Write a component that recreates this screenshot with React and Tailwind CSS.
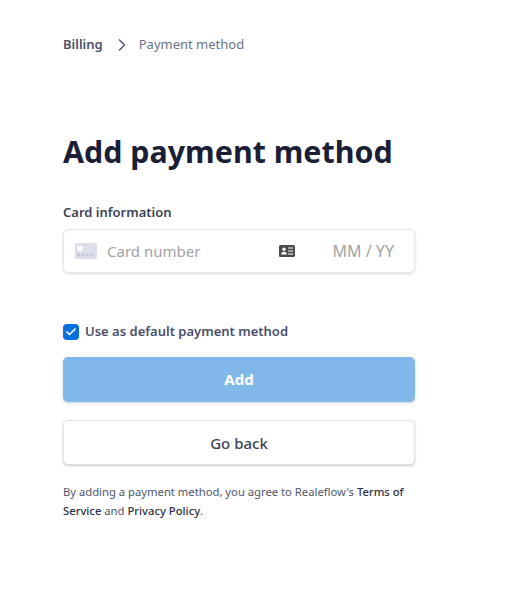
import React from 'react';
import { ChevronRight, Check } from 'lucide-react';

const CardIcon = () => (
  <svg width="22" height="16" viewBox="0 0 22 16" className="shrink-0">
    <rect width="22" height="16" rx="2" fill="#dcdfe9" />
    <rect x="2" y="3" width="6" height="5" rx="1" fill="#fff" />
    <path d="M2 12h3M6.5 12h3M11 12h3M15.5 12h3" stroke="#a9afc4" strokeWidth="1" />
  </svg>
);

const IdIcon = () => (
  <svg width="16" height="12" viewBox="0 0 16 12" className="shrink-0">
    <rect width="16" height="12" rx="1.5" fill="#4b4b4b" />
    <circle cx="5" cy="4.2" r="1.7" fill="#fff" />
    <path d="M2.2 9.6c0-1.8 1.2-2.8 2.8-2.8s2.8 1 2.8 2.8z" fill="#fff" />
    <path d="M9 3h5.2M9 6h5.2M9 9h5.2" stroke="#fff" strokeWidth="1.2" />
  </svg>
);

export default function App() {
  return (
    <div className="min-h-[591px] bg-white pl-[63px] pt-[35px] font-['Noto_Sans',sans-serif]">
      <div className="w-[352px]">
        {/* Breadcrumb */}
        <nav className="flex h-[19px] items-center text-[13px]">
          <span className="font-semibold text-[#4a5069]">Billing</span>
          <ChevronRight className="ml-[9px] mr-[7px] h-[20px] w-[20px] text-[#4a5069]" strokeWidth={1.6} />
          <span className="text-[#6b7288]">Payment method</span>
        </nav>

        <h1 className="mt-[76px] text-[30.4px] font-bold leading-[44px] text-[#1a1f36]">
          Add payment method
        </h1>

        <label className="mt-[29px] block text-[13px] font-semibold leading-[18px] text-[#3c4257]">
          Card information
        </label>

        {/* Card input */}
        <div className="mt-[8px] flex h-[44px] items-center rounded-[6px] border border-[#e8e9ee] bg-white pl-[11px] pr-[20px] shadow-[0_1px_3px_rgba(60,66,87,0.2)]">
          <CardIcon />
          <span className="ml-[10px] text-[15px] text-[#a3a3a3]">Card number</span>
          <span className="ml-auto"><IdIcon /></span>
          <span className="ml-[38px] text-[16px] text-[#a3a3a3]">MM / YY</span>
        </div>

        {/* Default checkbox */}
        <div className="mt-[50px] flex h-[18px] items-center">
          <span className="flex h-[16px] w-[16px] items-center justify-center rounded-[4px] bg-[#0570de]">
            <Check className="h-[12px] w-[12px] text-white" strokeWidth={3.5} />
          </span>
          <span className="ml-[6px] text-[13px] font-semibold text-[#4a5069]">Use as default payment method</span>
        </div>

        <button className="mt-[16px] block h-[45px] w-full rounded-[5px] bg-[#7fb8e9] text-[15px] font-bold text-white shadow-[0_1px_3px_rgba(60,66,87,0.25)]">
          Add
        </button>

        <button className="mt-[18px] block h-[45px] w-full rounded-[5px] border border-[#e3e4e9] bg-white pt-[1px] text-[15px] font-medium text-[#3c4257] shadow-[0_1px_2px_rgba(60,66,87,0.3)]">
          Go back
        </button>

        <p className="mt-[17px] text-[11.25px] leading-[19px] text-[#4f566b]">
          By adding a payment method, you agree to Realeflow's{' '}
          <span className="font-medium text-[#2a2f45]">Terms of Service</span> and{' '}
          <span className="font-medium text-[#2a2f45]">Privacy Policy</span>.
        </p>
      </div>
    </div>
  );
}
